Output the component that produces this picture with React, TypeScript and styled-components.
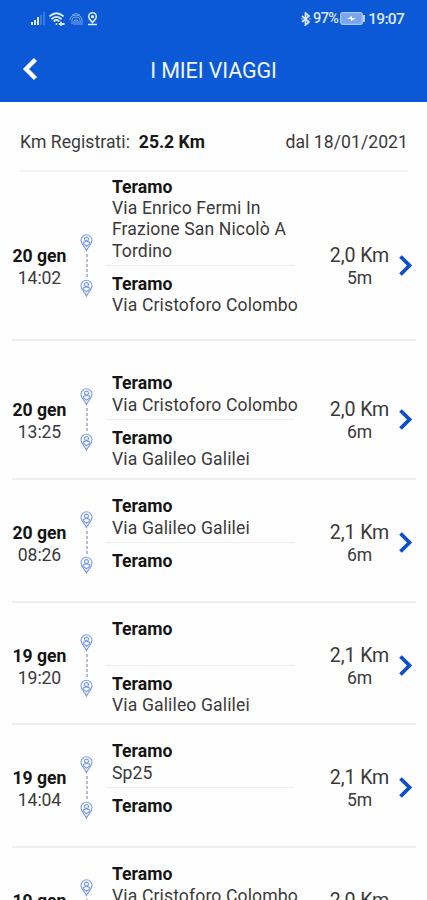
import React from 'react';
import styled, { createGlobalStyle } from 'styled-components';

const GlobalStyle = createGlobalStyle`
  * { box-sizing: border-box; }
  html, body { margin: 0; height: 100%; overflow: hidden; background: #fff; }
  body { font-family: Roboto, "Liberation Sans", sans-serif; color: #3a3a3a; }
`;

const Screen = styled.main`
  width: 427px;
  height: 900px;
  overflow: hidden;
  background: #fefefe;
`;
const Header = styled.header`
  height: 102px;
  background: #0b59d6;
  color: #f0f5ff;
`;
const StatusBar = styled.div`
  height: 37px;
  padding: 0 23px 0 30px;
  display: flex;
  align-items: center;
  justify-content: space-between;
`;
const StatusGroup = styled.div<{ $gap: number }>`
  display: flex;
  align-items: center;
  gap: ${(p) => p.$gap}px;
  color: #dce9ff;
`;
const StatusText = styled.span<{ $size: number; $spacing: number }>`
  font-size: ${(p) => p.$size}px;
  letter-spacing: ${(p) => p.$spacing}px;
  line-height: 20px;
  font-weight: 500;
  white-space: nowrap;
`;
const TitleBar = styled.div`
  height: 65px;
  display: grid;
  grid-template-columns: 61px 1fr 61px;
  align-items: center;
`;
const BackButton = styled.button`
  border: 0;
  padding: 0 0 2px 22px;
  background: none;
  display: flex;
`;
const Title = styled.h1`
  margin: 1px 0 0;
  text-align: center;
  font-size: 21.5px;
  font-weight: 400;
  letter-spacing: -0.1px;
`;
const Summary = styled.section`
  height: 70px;
  margin: 0 19px 0 20px;
  padding-top: 12px;
  border-bottom: 2px solid #f1f1f1;
  display: flex;
  align-items: center;
  justify-content: space-between;
  font-size: 17.6px;
  letter-spacing: 0.05px;
  white-space: pre;
`;
const Total = styled.strong`
  color: #171717;
  font-weight: 700;
  letter-spacing: 0;
`;
const Trip = styled.article<{ $height: number }>`
  height: ${(p) => p.$height}px;
  margin: 0 11px 0 12px;
  border-bottom: 2px solid #eeeeee;
  display: grid;
  grid-template-columns: 55px 39px 190px 27px 73px 1fr;
  align-items: start;
`;
const When = styled.div<{ $middle: number }>`
  margin-top: ${(p) => p.$middle - 19}px;
  text-align: center;
  font-size: 17.6px;
  line-height: 21.5px;
  letter-spacing: -0.1px;
  white-space: nowrap;
`;
const Bold = styled.div`
  color: #151515;
  font-weight: 700;
  letter-spacing: 0;
`;
const Track = styled.div<{ $middle: number }>`
  margin-top: ${(p) => p.$middle - 31}px;
  padding-left: 13px;
`;
const Stops = styled.div<{ $middle: number }>`
  display: grid;
  grid-template-rows: ${(p) => p.$middle}px auto;
`;
const Stop = styled.div<{ $origin?: boolean }>`
  padding: ${(p) => (p.$origin ? '0 0 3px 6px' : '7.5px 0 0 6px')};
  align-self: ${(p) => (p.$origin ? 'end' : 'start')};
  width: 100%;
  font-size: 17.6px;
  line-height: 21.3px;
  letter-spacing: 0.12px;
`;
const Address = styled.div`
  min-height: 21.3px;
  white-space: pre;
`;
const Rule = styled.div`
  width: 188px;
  height: 1px;
  background: #ededed;
`;
const Distance = styled.div<{ $middle: number }>`
  margin-top: ${(p) => p.$middle - 20}px;
  text-align: center;
  white-space: nowrap;
  font-size: 19.6px;
  line-height: 22px;
  letter-spacing: -0.1px;
`;
const Duration = styled.div`
  font-size: 17.6px;
  line-height: 22px;
`;
const Go = styled.div<{ $middle: number }>`
  margin-top: ${(p) => p.$middle - 11}px;
  padding-left: 2px;
  display: flex;
`;

const Signal = () => (
  <svg width="15" height="14" viewBox="0 0 15 14" fill="currentColor">
    <path d="M1 10h2v3H1zM4 8h2v5H4zM7 5h2v8H7z" />
    <path d="M10 3h2v10h-2zM13 0h2v13h-2z" opacity=".23" />
  </svg>
);
const Wifi = () => (
  <svg width="16" height="14" viewBox="0 0 16 14" fill="none" stroke="currentColor" strokeWidth="1.8" strokeLinecap="round">
    <path d="M1 4Q7.5-1.5 14 4M3 6.7Q7.5 3 12 6.7M5.2 9Q7.5 7 9.8 9" />
    <path d="M7.5 11.8v.3M10.5 12H15m-3-1.5v3" />
  </svg>
);
const Fingerprint = () => (
  <svg width="14" height="14" viewBox="0 0 14 14" fill="none" stroke="currentColor" opacity=".55">
    <path d="M3 3Q7 0 11 3M1 8V7Q2 3 7 3t6 4v6M3 12V8q0-3 4-3t4 3v5M5 13V9q2-3 4 0v4M7 8v5" />
  </svg>
);
const Location = () => (
  <svg width="11" height="14" viewBox="0 0 11 14" fill="none" stroke="currentColor" strokeWidth="1.6">
    <path d="M5.5 10.5C4 8.5 1.7 7.5 1.7 4.6a3.8 3.8 0 0 1 7.6 0c0 2.9-2.3 3.9-3.8 5.9ZM1 12.5h9" />
    <circle cx="5.5" cy="4.7" r=".8" />
  </svg>
);
const Bluetooth = () => (
  <svg width="10" height="14" viewBox="0 0 10 14" fill="none" stroke="currentColor" strokeWidth="1.7">
    <path d="m1 4 7 6-3.5 3V1L8 4l-7 6M.5 7h1M8.5 7h1" />
  </svg>
);
const Battery = () => (
  <svg width="26" height="13" viewBox="0 0 26 13" fill="none">
    <rect x=".7" y=".7" width="21.6" height="11.6" rx="2" fill="#78a5ec" stroke="#a9c7fa" strokeWidth="1.3" />
    <path d="M24 3v7" stroke="#c9deff" strokeWidth="1.8" />
    <path d="m7 7 5-3v2h4l-5 3V7Z" fill="#fff" />
  </svg>
);
const BackIcon = () => (
  <svg width="16" height="24" viewBox="0 0 16 24" fill="none" stroke="#fff" strokeWidth="4.4">
    <path d="M13.5 2.5 4 12l9.5 9.5" />
  </svg>
);
const Arrow = () => (
  <svg width="16" height="24" viewBox="0 0 16 24" fill="none" stroke="#0b4ed0" strokeWidth="3.8">
    <path d="m2.5 2.5 9 9-9 9" />
  </svg>
);
const PinShape = () => (
  <>
    <path d="M6.5 16.5C4.8 12.5 1 10.5 1 6.3a5.5 5.5 0 0 1 11 0c0 4.2-3.8 6.2-5.5 10.2Z" />
    <circle cx="6.5" cy="5.1" r="2" />
    <path d="M3.3 10V8.5l3.2-1.2 3.2 1.2V10M3.5 10l3 2.2 3-2.2" />
  </>
);
const RouteIcon = () => (
  <svg width="13" height="64" viewBox="0 0 13 64" fill="none" stroke="#779bea" strokeWidth="1.1">
    <PinShape />
    <path d="M7 20v25" stroke="#9c96e4" strokeWidth="1.4" strokeDasharray="3 2" />
    <g transform="translate(0 45.5)"><PinShape /></g>
  </svg>
);

interface TripData {
  date: string;
  time: string;
  from: string;
  to: string;
  km: string;
  minutes: string;
  height: number;
  middle: number;
}

const trips: TripData[] = [
  { date: '20 gen', time: '14:02', from: 'Via Enrico Fermi In\nFrazione San Nicolò A\nTordino', to: 'Via Cristoforo Colombo', km: '2,0 Km', minutes: '5m', height: 169, middle: 93 },
  { date: '20 gen', time: '13:25', from: 'Via Cristoforo Colombo', to: 'Via Galileo Galilei', km: '2,0 Km', minutes: '6m', height: 139, middle: 78 },
  { date: '20 gen', time: '08:26', from: 'Via Galileo Galilei', to: '', km: '2,1 Km', minutes: '6m', height: 123, middle: 62 },
  { date: '19 gen', time: '19:20', from: '', to: 'Via Galileo Galilei', km: '2,1 Km', minutes: '6m', height: 122, middle: 62 },
  { date: '19 gen', time: '14:04', from: 'Sp25', to: '', km: '2,1 Km', minutes: '5m', height: 123, middle: 62 },
  { date: '19 gen', time: '', from: 'Via Cristoforo Colombo', to: '', km: '2,0 Km', minutes: '', height: 123, middle: 62 },
];

export default function App() {
  return (
    <Screen>
      <GlobalStyle />
      <Header>
        <StatusBar>
          <StatusGroup $gap={4}><Signal /><Wifi /><Fingerprint /><Location /></StatusGroup>
          <StatusGroup $gap={2}>
            <Bluetooth /><StatusText $size={14.5} $spacing={-0.7}>97%</StatusText>
            <Battery /><StatusText $size={15.5} $spacing={-0.7}>19:07</StatusText>
          </StatusGroup>
        </StatusBar>
        <TitleBar>
          <BackButton aria-label="Indietro"><BackIcon /></BackButton>
          <Title>I MIEI VIAGGI</Title>
        </TitleBar>
      </Header>
      <Summary>
        <span>Km Registrati:  <Total>25.2 Km</Total></span>
        <span>dal 18/01/2021</span>
      </Summary>
      {trips.map((trip) => (
        <Trip key={trip.date + trip.time} $height={trip.height}>
          <When $middle={trip.middle}><Bold>{trip.date}</Bold>{trip.time}</When>
          <Track $middle={trip.middle}><RouteIcon /></Track>
          <Stops $middle={trip.middle}>
            <Stop $origin><Bold>Teramo</Bold><Address>{trip.from}</Address></Stop>
            <div><Rule /><Stop><Bold>Teramo</Bold><Address>{trip.to}</Address></Stop></div>
          </Stops>
          <span />
          <Distance $middle={trip.middle}>{trip.km}<Duration>{trip.minutes}</Duration></Distance>
          <Go $middle={trip.middle}><Arrow /></Go>
        </Trip>
      ))}
    </Screen>
  );
}
